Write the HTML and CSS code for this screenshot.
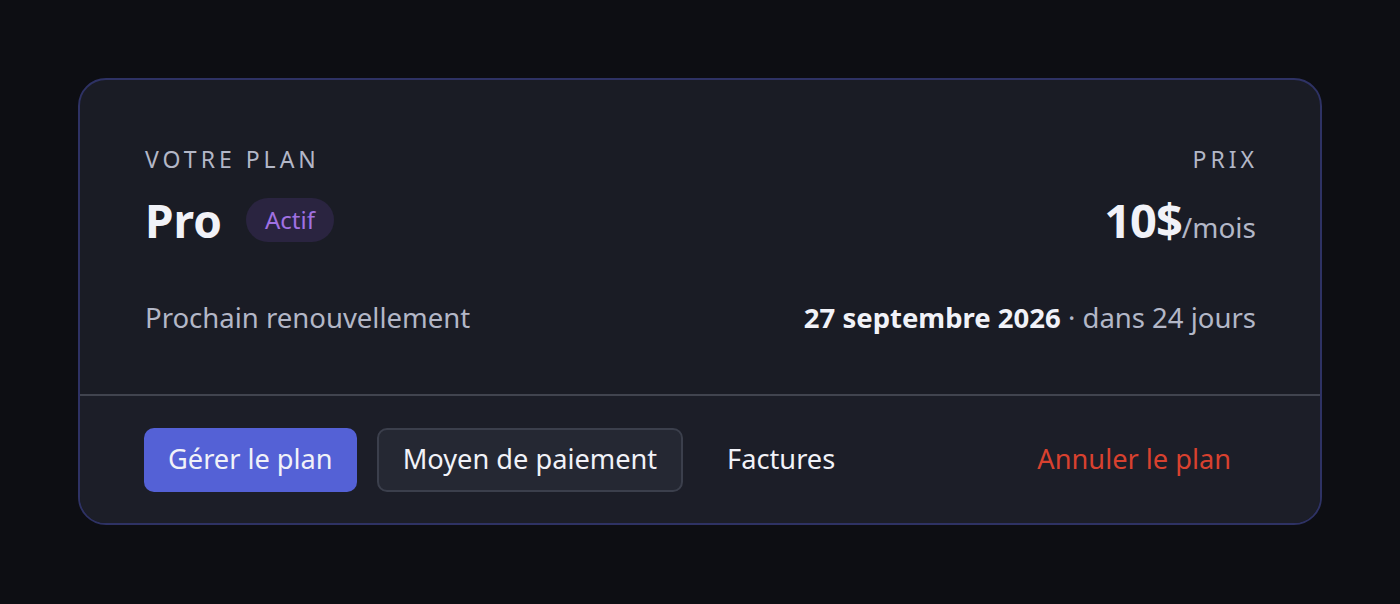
FILE: index.html
```html
<!DOCTYPE html>
<html>
<head>
  <title>Abonnement</title>
  <link rel="stylesheet" href="styles.css">
</head>
<body>
  <div class="card">
    <div class="card-body">
      <div class="plan-head">
        <div class="plan-col">
          <div class="label">Votre plan</div>
          <div class="plan-name">
            <h1>Pro</h1>
            <span class="badge">Actif</span>
          </div>
        </div>
        <div class="plan-col right">
          <div class="label">Prix</div>
          <div class="price"><strong>10$</strong><span>/mois</span></div>
        </div>
      </div>

      <div class="renewal">
        <span class="muted">Prochain renouvellement</span>
        <span><strong>27 septembre 2026</strong><span class="muted"> · dans 24 jours</span></span>
      </div>
    </div>

    <div class="card-actions">
      <button class="btn btn-primary">Gérer le plan</button>
      <button class="btn btn-outline">Moyen de paiement</button>
      <button class="btn btn-ghost">Factures</button>
      <button class="btn btn-danger">Annuler le plan</button>
    </div>
  </div>
</body>
</html>
```

FILE: styles.css
```css
:root {
  --bg: #0d0e13;
  --card: #1a1c25;
  --card-alt: #1c1e28;
  --border: #2e3264;
  --divider: #41444f;
  --text: #f1f2f8;
  --text-secondary: #b3b7c7;
  --primary: #5461d6;
  --badge-bg: #2a2440;
  --badge-text: #a071e2;
  --danger: #d8412f;
}

* {
  margin: 0;
  padding: 0;
  box-sizing: border-box;
}

body {
  width: 1400px;
  height: 604px;
  padding: 78px 78px;
  font-family: 'Noto Sans', 'Open Sans', sans-serif;
  background: var(--bg);
  color: var(--text);
  overflow: hidden;
}

.card {
  background: var(--card);
  border: 2px solid var(--border);
  border-radius: 28px;
  overflow: hidden;
}

.card-body {
  padding: 64px 64px 59px 65px;
}

.plan-head {
  display: flex;
  justify-content: space-between;
}

.plan-col {
  display: flex;
  flex-direction: column;
}

.plan-col.right {
  align-items: flex-end;
}

.label {
  font-size: 23px;
  line-height: 30px;
  letter-spacing: 4px;
  margin-right: -2px;
  text-transform: uppercase;
  color: var(--text-secondary);
}

.plan-name {
  display: flex;
  align-items: center;
  gap: 24px;
  margin-top: 22px;
  height: 48px;
}

h1 {
  font-size: 46px;
  font-weight: 700;
  line-height: 48px;
}

.badge {
  display: inline-flex;
  align-items: center;
  height: 44px;
  padding: 0 19px 2px;
  border-radius: 22px;
  background: var(--badge-bg);
  color: var(--badge-text);
  font-size: 24px;
}

.price {
  margin-top: 22px;
  height: 48px;
  line-height: 48px;
}

.price strong {
  font-size: 47px;
  font-weight: 700;
  letter-spacing: -1px;
}

.price span {
  font-size: 28px;
  color: var(--text-secondary);
}

.renewal {
  display: flex;
  justify-content: space-between;
  align-items: center;
  margin-top: 57px;
  font-size: 27.5px;
  line-height: 34px;
}

.renewal strong {
  font-weight: 700;
}

.muted {
  color: var(--text-secondary);
}

.card-actions {
  display: flex;
  align-items: center;
  gap: 20px;
  padding: 32px 65px 31px 64px;
  background: var(--card-alt);
  border-top: 2px solid var(--divider);
}

.btn {
  height: 64px;
  padding: 0 24px 4px;
  border: 0;
  border-radius: 10px;
  background: none;
  font-family: inherit;
  font-size: 27.2px;
  color: var(--text);
}

.btn-primary {
  background: var(--primary);
}

.btn-outline {
  background: #252833;
  border: 2px solid #3b3f4c;
}

.btn-danger {
  margin-left: auto;
  color: var(--danger);
}
```
